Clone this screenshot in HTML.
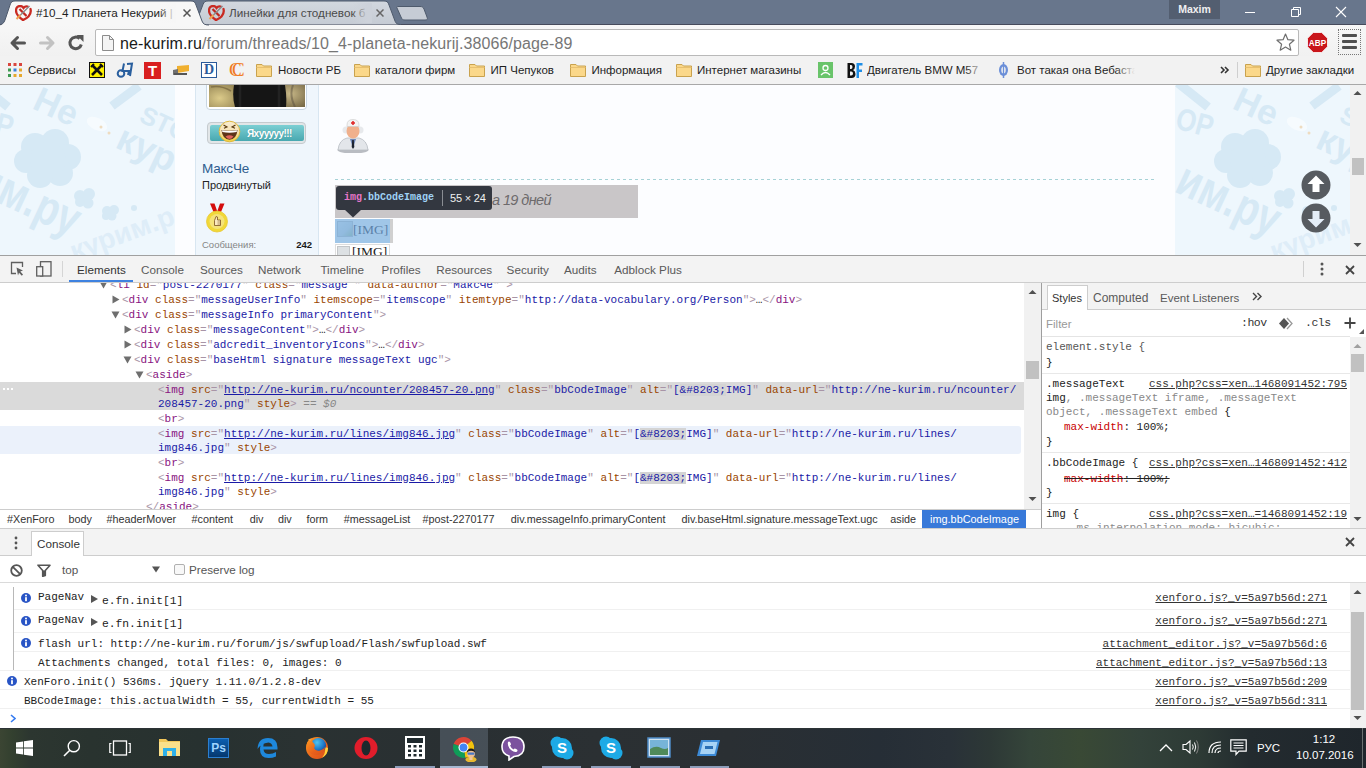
<!DOCTYPE html>
<html><head><meta charset="utf-8">
<style>
*{margin:0;padding:0;box-sizing:border-box}
html,body{width:1366px;height:768px;overflow:hidden;background:#fff;font-family:"Liberation Sans",sans-serif;font-size:12px;color:#222}
.a{position:absolute}
.mono{font-family:"Liberation Mono",monospace;font-size:11px;line-height:14px;white-space:nowrap}
.ui{font-family:"Liberation Sans",sans-serif;font-size:11.5px;line-height:16px;white-space:nowrap}
.bm{top:62px;font-size:11.5px;line-height:16px;color:#1e1e1e;white-space:nowrap}
.pat{background:#eef7fd;overflow:hidden}
.pt{position:absolute;color:#d9ebf7;font-weight:bold;white-space:nowrap;transform-origin:0 0;line-height:1}
.cl{position:absolute;background:#d6e9f6;border-radius:50%}
u{text-decoration:underline}
</style></head><body>
<!-- TITLEBAR -->
<div class="a" style="left:0;top:0;width:1366px;height:25px;background:#68768c"></div>
<div class="a" style="left:0;top:25px;width:1366px;height:31px;background:linear-gradient(#f7f7f7,#f1f1f1)"></div>
<div class="a" style="left:0;top:24px;width:1366px;height:1px;background:#464a5b"></div>
<svg class="a" style="left:0;top:0" width="440" height="26">
  <defs>
    <linearGradient id="tg2" x1="0" y1="0" x2="0" y2="1"><stop offset="0" stop-color="#d3d8df"/><stop offset="1" stop-color="#c5cbd4"/></linearGradient>
  </defs>
  
  <path d="M192,24.5 C195,24.5 196,23 197,20 L203,4.5 C204,2 205,1 208,1 L384,1 C387,1 388,2 389,5 L395,21 C396,23.5 397,24.5 401,24.5 Z" fill="url(#tg2)"/>
  <path d="M192,24.5 C195,24.5 196,23 197,20 L203,4.5 C204,2 205,1 208,1 L384,1 C387,1 388,2 389,5 L395,21 C396,23.5 397,24.5 401,24.5" fill="none" stroke="#4e5a6c" stroke-width="1"/>
  <path d="M398,6.5 L420,6.5 C422,6.5 423,7 424,9 L427,17 C428,19.5 427,20 425,20 L405,20 C403,20 402,19.5 401,17 L397,8 C396.5,7 397,6.5 398,6.5 Z" fill="#c6ccd5" stroke="#4e5a6c" stroke-width="1"/>
  <path d="M-2,26 C2,25 4,23 5,20 L10,5 C11,2 12,1 15,1 L191,1 C194,1 195,2 196,5 L202,21 C203,24 205,25 209,26 Z" fill="#f7f7f7"/>
  <path d="M-2,25 C2,25 4,23 5,20 L10,5 C11,2 12,1 15,1 L191,1 C194,1 195,2 196,5 L202,21 C203,24 205,25 209,25" fill="none" stroke="#4e5a6c" stroke-width="1"/>
</svg>
<!-- tab favicons -->
<svg class="a" style="left:15px;top:5px" width="17" height="16" viewBox="0 0 17 16">
  <path d="M8,15 C3.5,12 1,9 1,5.5 C1,2.5 3,1 5,1 C7,1 8,2 8.5,3 C9.5,1.8 11,1.2 12.5,1.6" fill="none" stroke="#c92a22" stroke-width="2.3" stroke-linecap="round"/>
  <path d="M15.5,4 C16,6 15.8,9 13.5,11.5 C12,13 10,14.2 8,15" fill="none" stroke="#c92a22" stroke-width="2.3" stroke-linecap="round"/>
  <line x1="4.5" y1="4" x2="11.5" y2="11" stroke="#c02820" stroke-width="2.3"/>
  <line x1="5" y1="10.5" x2="14.5" y2="1" stroke="#8a8a8a" stroke-width="1.5"/>
  <line x1="1.5" y1="14" x2="5.5" y2="10" stroke="#f0a050" stroke-width="2"/>
</svg>
<svg class="a" style="left:208px;top:5px" width="17" height="16" viewBox="0 0 17 16">
  <path d="M8,15 C3.5,12 1,9 1,5.5 C1,2.5 3,1 5,1 C7,1 8,2 8.5,3 C9.5,1.8 11,1.2 12.5,1.6" fill="none" stroke="#c92a22" stroke-width="2.3" stroke-linecap="round"/>
  <path d="M15.5,4 C16,6 15.8,9 13.5,11.5 C12,13 10,14.2 8,15" fill="none" stroke="#c92a22" stroke-width="2.3" stroke-linecap="round"/>
  <line x1="4.5" y1="4" x2="11.5" y2="11" stroke="#c02820" stroke-width="2.3"/>
  <line x1="5" y1="10.5" x2="14.5" y2="1" stroke="#8a8a8a" stroke-width="1.5"/>
  <line x1="1.5" y1="14" x2="5.5" y2="10" stroke="#f0a050" stroke-width="2"/>
</svg>
<div class="a" style="left:36px;top:5px;font-size:11.7px;color:#1e1e1e;white-space:nowrap;width:138px;overflow:hidden;line-height:16px">#10_4 Планета Некурий | Сообщество</div>
<div class="a" style="left:158px;top:3px;width:18px;height:20px;background:linear-gradient(90deg,rgba(246,246,246,0),#f6f6f6)"></div>
<div class="a" style="left:229px;top:5px;font-size:11.7px;color:#4a4a4a;white-space:nowrap;width:140px;overflow:hidden;line-height:16px">Линейки для стодневок б</div>
<div class="a" style="left:352px;top:3px;width:20px;height:20px;background:linear-gradient(90deg,rgba(205,210,218,0),#cdd2da 80%)"></div>
<svg class="a" style="left:183px;top:9px" width="8" height="8"><path d="M0.5,0.5 L7.5,7.5 M7.5,0.5 L0.5,7.5" stroke="#555" stroke-width="1.5"/></svg>
<svg class="a" style="left:376px;top:9px" width="8" height="8"><path d="M0.5,0.5 L7.5,7.5 M7.5,0.5 L0.5,7.5" stroke="#666" stroke-width="1.5"/></svg>
<!-- profile badge -->
<div class="a" style="left:1169px;top:0;width:51px;height:19px;background:#535e70;color:#f0f0f0;font-size:10.5px;font-weight:bold;line-height:18px;text-align:center">Maxim</div>
<!-- window controls -->
<div class="a" style="left:1245px;top:12px;width:10px;height:1px;background:#fff"></div>
<svg class="a" style="left:1289px;top:6px" width="12" height="12"><path d="M2.5,3.5 h7 v7 h-7 z M4.5,3.5 v-2 h7 v7 h-2" fill="none" stroke="#fff" stroke-width="1"/></svg>
<svg class="a" style="left:1335px;top:6px" width="12" height="12"><path d="M1,1 L11,11 M11,1 L1,11" stroke="#fff" stroke-width="1.1"/></svg>

<!-- TOOLBAR -->

<svg class="a" style="left:9px;top:35px" width="18" height="16" viewBox="0 0 18 16"><path d="M15.5,8 H3.5 M8.5,2.5 L3,8 L8.5,13.5" fill="none" stroke="#555" stroke-width="3" stroke-linecap="round" stroke-linejoin="round"/></svg>
<svg class="a" style="left:38px;top:35px" width="18" height="16" viewBox="0 0 18 16"><path d="M2.5,8 H14.5 M9.5,2.5 L15,8 L9.5,13.5" fill="none" stroke="#c2c2c2" stroke-width="3" stroke-linecap="round" stroke-linejoin="round"/></svg>
<svg class="a" style="left:67px;top:34px" width="18" height="18" viewBox="0 0 18 18"><path d="M14.3,10.5 A5.8,5.8 0 1 1 12.6,4.6" fill="none" stroke="#555" stroke-width="3"/><path d="M9.5,1 L16.5,1 L16.5,8 Z" fill="#555"/></svg>
<div class="a" style="left:95px;top:29px;width:1204px;height:27px;background:#fff;border:1px solid #b9b9b9;border-radius:2px"></div>
<svg class="a" style="left:102px;top:35px" width="12" height="16" viewBox="0 0 12 16"><path d="M0.5,0.5 H7.5 L11.5,4.5 V15.5 H0.5 Z" fill="#f4f4f4" stroke="#8c8c8c"/><path d="M7.5,0.5 V4.5 H11.5" fill="none" stroke="#8c8c8c"/></svg>
<div class="a" style="left:120px;top:33.7px;font-size:16px;line-height:20px;color:#767676;white-space:nowrap;letter-spacing:0.1px"><span style="color:#1a1a1a">ne-kurim.ru</span>/forum/threads/10_4-planeta-nekurij.38066/page-89</div>
<svg class="a" style="left:1276px;top:33px" width="19" height="19" viewBox="0 0 19 19"><path d="M9.5,1 L11.9,6.7 L18,7.2 L13.4,11.2 L14.8,17.2 L9.5,14 L4.2,17.2 L5.6,11.2 L1,7.2 L7.1,6.7 Z" fill="none" stroke="#6e6e6e" stroke-width="1.2" stroke-linejoin="round"/></svg>
<svg class="a" style="left:1307px;top:32px" width="21" height="21" viewBox="0 0 21 21"><path d="M6.3,0.5 H14.7 L20.5,6.3 V14.7 L14.7,20.5 H6.3 L0.5,14.7 V6.3 Z" fill="#c9161b" stroke="#fff" stroke-width="0.8"/><text x="10.5" y="13.8" text-anchor="middle" font-family="Liberation Sans" font-weight="bold" font-size="8.2" fill="#fff">ABP</text></svg>
<div class="a" style="left:1338px;top:29px;width:23px;height:26px;border:1px dotted #777"></div>
<div class="a" style="left:1342px;top:34px;width:15px;height:3px;background:#4f4f4f;border-radius:1px"></div>
<div class="a" style="left:1342px;top:40px;width:15px;height:3px;background:#4f4f4f;border-radius:1px"></div>
<div class="a" style="left:1342px;top:46px;width:15px;height:3px;background:#4f4f4f;border-radius:1px"></div>
<!-- BOOKMARKS -->
<div class="a" style="left:0;top:56px;width:1366px;height:28px;background:#f2f2f2"></div>
<div class="a" style="left:0;top:84px;width:1366px;height:1px;background:#a8a8a8"></div>
<svg class="a" style="left:8px;top:63px" width="14" height="14" viewBox="0 0 14 14">
 <rect x="0" y="0" width="3" height="3" fill="#d9453d"/><rect x="5.5" y="0" width="3" height="3" fill="#d9453d"/><rect x="11" y="0" width="3" height="3" fill="#d9453d"/>
 <rect x="0" y="5.5" width="3" height="3" fill="#3d9a50"/><rect x="5.5" y="5.5" width="3" height="3" fill="#3b80d9"/><rect x="11" y="5.5" width="3" height="3" fill="#e6a82e"/>
 <rect x="0" y="11" width="3" height="3" fill="#3d9a50"/><rect x="5.5" y="11" width="3" height="3" fill="#e6a82e"/><rect x="11" y="11" width="3" height="3" fill="#e6a82e"/>
</svg>
<div class="a bm" style="left:28px">Сервисы</div>
<svg class="a" style="left:89px;top:62px" width="16" height="16" viewBox="0 0 16 16"><rect x="0.5" y="0.5" width="15" height="15" fill="#fff200" stroke="#111"/><path d="M3,3 L13,13 M13,3 L3,13" stroke="#111" stroke-width="2.6"/><path d="M2,5 L5,2 M11,2 L14,5" stroke="#111" stroke-width="2"/></svg>
<svg class="a" style="left:116px;top:62px" width="18" height="16" viewBox="0 0 18 16"><circle cx="5" cy="11.5" r="3.3" fill="none" stroke="#2a5f9e" stroke-width="2"/><path d="M8,1.5 L6.5,9 H13 L12,13 M11,2 L16,1.5 L14,14" fill="none" stroke="#2a5f9e" stroke-width="2"/></svg>
<div class="a" style="left:144px;top:62px;width:17px;height:17px;background:#d92020;color:#fff;font-weight:bold;font-size:15px;line-height:17px;text-align:center;font-family:'Liberation Sans'">T</div>
<svg class="a" style="left:172px;top:63px" width="18" height="14" viewBox="0 0 18 14"><path d="M5,3 L17,2 L17,8 L5,10 Z" fill="#f0b030"/><path d="M1,7 L6,6 L6,11 L1,12 Z" fill="#707070"/><rect x="2" y="10" width="13" height="2" fill="#555"/></svg>
<div class="a" style="left:201px;top:62px;width:16px;height:16px;border:1px solid #2a5a9a;background:#fff;color:#2a5a9a;font-weight:bold;font-size:14px;line-height:14px;text-align:center;font-family:'Liberation Serif'">D</div>
<div class="a" style="left:229px;top:59px;color:#f07b22;font-size:19px;line-height:22px;font-family:'Liberation Serif'">C</div>
<div class="a" style="left:232px;top:59px;color:#f07b22;font-size:19px;line-height:22px;font-family:'Liberation Serif'">C</div>
<svg class="a" style="left:256px;top:62px" width="16" height="16" viewBox="0 0 16 16"><path d="M0.5,2.5 H6 L7.5,4 H15.5 V14.5 H0.5 Z" fill="#fbd88a" stroke="#c9a24e"/><path d="M0.5,5.5 H15.5" stroke="#e8c070"/></svg>
<div class="a bm" style="left:278px">Новости РБ</div>
<svg class="a" style="left:354px;top:62px" width="16" height="16" viewBox="0 0 16 16"><path d="M0.5,2.5 H6 L7.5,4 H15.5 V14.5 H0.5 Z" fill="#fbd88a" stroke="#c9a24e"/><path d="M0.5,5.5 H15.5" stroke="#e8c070"/></svg>
<div class="a bm" style="left:375px">каталоги фирм</div>
<svg class="a" style="left:469px;top:62px" width="16" height="16" viewBox="0 0 16 16"><path d="M0.5,2.5 H6 L7.5,4 H15.5 V14.5 H0.5 Z" fill="#fbd88a" stroke="#c9a24e"/><path d="M0.5,5.5 H15.5" stroke="#e8c070"/></svg>
<div class="a bm" style="left:490.5px">ИП Чепуков</div>
<svg class="a" style="left:570px;top:62px" width="16" height="16" viewBox="0 0 16 16"><path d="M0.5,2.5 H6 L7.5,4 H15.5 V14.5 H0.5 Z" fill="#fbd88a" stroke="#c9a24e"/><path d="M0.5,5.5 H15.5" stroke="#e8c070"/></svg>
<div class="a bm" style="left:591.5px">Информация</div>
<svg class="a" style="left:676px;top:62px" width="16" height="16" viewBox="0 0 16 16"><path d="M0.5,2.5 H6 L7.5,4 H15.5 V14.5 H0.5 Z" fill="#fbd88a" stroke="#c9a24e"/><path d="M0.5,5.5 H15.5" stroke="#e8c070"/></svg>
<div class="a bm" style="left:697px">Интернет магазины</div>
<div class="a" style="left:818px;top:62px;width:15px;height:16px;background:#69c46a"></div><svg class="a" style="left:818px;top:62px" width="15" height="16"><circle cx="7.5" cy="6" r="2.5" fill="none" stroke="#fff" stroke-width="1.3"/><path d="M3,13 Q7.5,8 12,13" fill="none" stroke="#fff" stroke-width="1.3"/></svg>
<svg class="a" style="left:847px;top:62px" width="16" height="17" viewBox="0 0 16 17"><path d="M0.5,1 H4.5 Q8,1 8,4.5 Q8,7 6,8 Q8.5,9 8.5,12 Q8.5,16 4.5,16 H0.5 Z M3,3 V7 H4 Q5.5,7 5.5,5 Q5.5,3 4,3 Z M3,9.5 V13.5 H4.2 Q6,13.5 6,11.5 Q6,9.5 4.2,9.5 Z" fill="#111" fill-rule="evenodd"/><path d="M9.5,1 H15.5 V3.5 H12 V7.5 H15 V10 H12 V16 H9.5 Z" fill="#1f8ee6"/></svg>
<div class="a bm" style="left:867px;width:118px;overflow:hidden">Двигатель BMW M57</div>
<div class="a" style="left:965px;top:60px;width:20px;height:20px;background:linear-gradient(90deg,rgba(242,242,242,0),#f2f2f2)"></div>
<svg class="a" style="left:998px;top:62px" width="11" height="16" viewBox="0 0 11 16"><ellipse cx="5.5" cy="8" rx="4.5" ry="6" fill="#6b8fd8"/><path d="M5.5,0 V16" stroke="#6b8fd8" stroke-width="1.5"/><ellipse cx="5.5" cy="8" rx="2.2" ry="3.5" fill="#f2f2f2"/><path d="M5.5,3 V13" stroke="#6b8fd8" stroke-width="1.3"/></svg>
<div class="a bm" style="left:1017px;width:118px;overflow:hidden">Вот такая она Вебаста</div>
<div class="a" style="left:1115px;top:60px;width:20px;height:20px;background:linear-gradient(90deg,rgba(242,242,242,0),#f2f2f2)"></div>
<svg class="a" style="left:1220px;top:66px" width="10" height="8"><path d="M1,1 L4,4 L1,7 M5,1 L8,4 L5,7" fill="none" stroke="#333" stroke-width="1.6"/></svg>
<div class="a" style="left:1237px;top:62px;width:1px;height:16px;background:#cfcfcf"></div>
<svg class="a" style="left:1245px;top:62px" width="16" height="16" viewBox="0 0 16 16"><path d="M0.5,2.5 H6 L7.5,4 H15.5 V14.5 H0.5 Z" fill="#fbd88a" stroke="#c9a24e"/><path d="M0.5,5.5 H15.5" stroke="#e8c070"/></svg>
<div class="a bm" style="left:1266px">Другие закладки</div>
<!-- PAGE -->
<div class="a" style="left:0;top:85px;width:1350px;height:170px;background:#fcfdff;overflow:hidden">
  <svg class="a" style="left:0;top:0" width="175" height="170"><rect width="175" height="170" fill="#eef7fd"/><defs><g id="tile" fill="#d6e9f5" font-family="Liberation Sans" font-weight="bold">
  <text x="31" y="23" font-size="35" transform="rotate(25 31 23)">Не</text>
  <text x="0" y="0" font-size="26" transform="translate(-26 43) rotate(15) scale(1 1.2)">OP</text>
  <text x="138" y="36" font-size="25" transform="rotate(25 138 36)">STO</text>
  <text x="114" y="62" font-size="37" transform="rotate(25 114 62)">кур</text>
  <text x="0" y="0" font-size="39" transform="translate(-27 106) rotate(25) scale(1 1.25)">им.ру</text>
  <text x="74" y="176" font-size="28" fill="#deedf8" transform="rotate(-20 74 176)">курим.р</text>
  <path d="M112,21 L139,1" stroke="#d6e9f5" stroke-width="9"/>
  <path d="M-22,-2 L8,22" stroke="#d6e9f5" stroke-width="9"/>
  <g>
   <circle cx="35" cy="62" r="14"/><circle cx="55" cy="58" r="14"/><circle cx="68" cy="72" r="13"/><circle cx="60" cy="88" r="13"/><circle cx="40" cy="90" r="13"/><circle cx="26" cy="76" r="12"/><circle cx="48" cy="75" r="18"/>
  </g>
  <g><circle cx="80" cy="111" r="6"/><circle cx="89" cy="109" r="6"/><circle cx="88" cy="118" r="5.5"/><circle cx="80" cy="117" r="5"/></g>
  <g><circle cx="107" cy="126" r="5"/><circle cx="114" cy="125" r="5"/><circle cx="112" cy="131" r="4.5"/><circle cx="106" cy="131" r="4"/></g>
  <circle cx="134" cy="123" r="3"/>
  <ellipse cx="97" cy="39" rx="11" ry="6" fill="#f6fbfe" transform="rotate(25 97 39)"/>
  <circle cx="101" cy="42" r="1.5" fill="#eedcc0"/><circle cx="109" cy="48" r="1.5" fill="#eedcc0"/>
</g></defs><use href="#tile"/></svg>
  <svg class="a" style="left:1175px;top:0" width="175" height="170"><rect width="175" height="170" fill="#eef7fd"/><use href="#tile" x="25"/></svg>
  <!-- sidebar -->
  <div class="a" style="left:195px;top:-1px;width:124px;height:172px;background:#eff6fc;border-left:1px solid #d8e6f1;border-right:1px solid #d8e6f1"></div>
  <div class="a" style="left:206px;top:-4px;width:101px;height:29px;background:#fff;border:1px solid #c8d6e2;border-radius:4px"></div>
  <svg class="a" style="left:209px;top:0" width="96" height="22" viewBox="0 0 96 22"><defs><radialGradient id="kh1" cx="0.35" cy="0.6" r="0.7"><stop offset="0" stop-color="#dccb8a"/><stop offset="1" stop-color="#9a8a58"/></radialGradient><radialGradient id="kh2" cx="0.5" cy="0.4" r="0.7"><stop offset="0" stop-color="#c8b888"/><stop offset="1" stop-color="#7a6c48"/></radialGradient></defs><rect width="30" height="22" fill="url(#kh1)"/><rect x="66" width="30" height="22" fill="url(#kh2)"/><path d="M2,2 Q12,0 22,6" stroke="#6a5a35" stroke-width="1.5" fill="none" opacity="0.6"/><path d="M84,0 Q80,10 86,22" stroke="#5a5040" stroke-width="2" fill="none" opacity="0.5"/><path d="M25,0 H76 Q78,12 77,22 H26 Q23,12 25,0 Z" fill="#151515"/><path d="M31,0 V22 M70,0 V22" stroke="#2c2c2c" stroke-width="2.5" opacity="0.6"/></svg>
  <div class="a" style="left:207px;top:37px;width:99px;height:22px;background:#e2e6e8;border:1px solid #c5cbcf;border-radius:4px"></div>
  <div class="a" style="left:210px;top:40px;width:94px;height:16px;background:linear-gradient(#7ccfd3,#48a8b0);border-radius:2px"></div>
  <div class="a" style="left:247px;top:41px;font-size:10px;line-height:16px;color:#fff;font-weight:bold;letter-spacing:-0.6px;text-shadow:0 0 1px #3a8a90">Яхууууу!!!</div>
  <svg class="a" style="left:218px;top:35px" width="23" height="23" viewBox="0 0 23 23"><defs><linearGradient id="smg" x1="0" y1="0" x2="0" y2="1"><stop offset="0" stop-color="#f8ecd2"/><stop offset="0.55" stop-color="#f6e2b0"/><stop offset="1" stop-color="#f3d035"/></linearGradient></defs><circle cx="11.5" cy="11.5" r="10.3" fill="url(#smg)" stroke="#e0b83a" stroke-width="1"/><path d="M3.5,10 Q11.5,11.5 19.5,10 Q18.5,19.5 11.5,19.8 Q4.5,19.5 3.5,10 Z" fill="#5e3418"/><path d="M4,10.2 Q11.5,11.6 19,10.2 L18.7,12 Q11.5,13.3 4.3,12 Z" fill="#fff"/><path d="M7.5,16.5 Q11.5,14 15.5,16.5 Q13.5,19 11.5,19 Q9.5,19 7.5,16.5Z" fill="#e0625a"/><path d="M5.5,5 L9,7 L6,8.3 M17.5,5 L14,7 L17,8.3" fill="none" stroke="#5a3a10" stroke-width="1.1"/></svg>
  <div class="a" style="left:202px;top:76.2px;font-size:13.5px;line-height:16px;color:#2e5d8f;letter-spacing:-0.2px">МаксЧе</div>
  <div class="a" style="left:202px;top:93px;font-size:11px;line-height:14px;color:#222">Продвинутый</div>
  <svg class="a" style="left:205px;top:117px" width="24" height="31" viewBox="0 0 24 31"><path d="M5,1.5 L9.5,1.5 L12.5,10 L8.5,10 Z M19.5,1.5 L15,1.5 L12,10 L16,10 Z" fill="#d40d0d"/><circle cx="12" cy="19.5" r="10.5" fill="#f1d838" stroke="#e8c830" stroke-width="0.8"/><circle cx="12" cy="19.5" r="7.5" fill="#f5e37a"/><path d="M9.5,23 V18.5 L11,14.5 L12.5,15 V18 H15.5 V23.5 H9.5 Z" fill="#fbe9c0" stroke="#7a5020" stroke-width="0.8"/><path d="M12.5,20 H15.5 M12.5,22 H15.5" stroke="#7a5020" stroke-width="0.6"/></svg>
  <div class="a" style="left:202px;top:153.5px;font-size:9.5px;line-height:12px;color:#858585">Сообщения:</div>
  <div class="a" style="left:292px;top:153.5px;width:20px;font-size:9.5px;line-height:12px;color:#1a1a1a;font-weight:bold;text-align:right">242</div>
  <!-- doctor -->
  <svg class="a" style="left:337px;top:33px" width="32" height="35" viewBox="0 0 32 35"><ellipse cx="16" cy="32" rx="15.5" ry="3.5" fill="#b9bcc2"/><path d="M1,32 Q2,22 10,20 L22,20 Q30,22 31,32 Z" fill="#e3e6ea" stroke="#b7bcc3" stroke-width="0.8"/><path d="M13,21 L16,30 L19,21 Z" fill="#6d86b8"/><path d="M15.2,22 L16.8,22 L17.3,29 L16,31 L14.7,29 Z" fill="#1d2430"/><circle cx="9" cy="12" r="3.5" fill="#e7e9ec"/><circle cx="23" cy="12" r="3.5" fill="#e7e9ec"/><ellipse cx="16" cy="13" rx="6.5" ry="7.5" fill="#f0b08c"/><path d="M10,7 Q10,1.5 16,1.5 Q22,1.5 22,7 L22,8.5 L10,8.5 Z" fill="#f3f3f3" stroke="#c9c9c9" stroke-width="0.6"/><path d="M16,3 V7 M14,5 H18" stroke="#e02525" stroke-width="1.5"/></svg>
  <!-- dashed -->
  <div class="a" style="left:335px;top:94px;width:822px;height:1px;background:repeating-linear-gradient(90deg,#a6d2d6 0 3px,transparent 3px 6px)"></div>
  <!-- grey signature box -->
  <div class="a" style="left:335px;top:100px;width:303px;height:33px;background:#c9c6c8"></div>
  <div class="a" style="left:492px;top:106px;font-size:14.5px;line-height:18px;color:#6d6a6c;font-style:italic;letter-spacing:-0.6px">а 19 дней</div>
  <!-- tooltip -->
  <div class="a" style="left:336px;top:101px;width:156px;height:24px;background:#333740;border-radius:3px"></div>
  <svg class="a" style="left:344px;top:124px" width="18" height="9"><path d="M0,0 L18,0 L9,8.5 Z" fill="#333740"/></svg>
  <div class="a mono" style="left:344px;top:106px;font-size:10px;line-height:14px;color:#9fd2f6;white-space:nowrap;font-weight:bold"><span style="color:#e776c9">img</span>.bbCodeImage</div>
  <div class="a" style="left:442px;top:105px;width:1px;height:16px;background:#8a8d93"></div>
  <div class="a" style="left:450px;top:105.5px;font-size:11px;line-height:15px;color:#f1f1f1;letter-spacing:-0.2px">55 × 24</div>
  <!-- highlighted img -->
  <div class="a" style="left:335px;top:134px;width:55px;height:24px;background:#fff"></div>
  <div class="a" style="left:337px;top:136px;width:16px;height:16px;background:linear-gradient(135deg,#e8eef2 0%,#d4dde4 60%,#a9c7a0 100%);border:1px solid #c3c6c9"></div>
  <div class="a" style="left:353px;top:136px;font-family:'Liberation Serif';font-size:13.5px;line-height:17px;color:#334">[IMG]</div>
  <div class="a" style="left:335px;top:134px;width:55px;height:24px;background:rgba(111,168,220,0.66)"></div>
  <div class="a" style="left:390px;top:134px;width:3px;height:24px;background:#d0d0d0"></div>
  <div class="a" style="left:335px;top:159px;width:55px;height:12px;background:#fff;border:1px solid #ddd"></div>
  <div class="a" style="left:337px;top:161px;width:13px;height:14px;background:#dde1e4;border:1px solid #c3c6c9"></div>
  <div class="a" style="left:352px;top:158px;font-family:'Liberation Serif';font-size:13.5px;line-height:17px;color:#222">[IMG]</div>
  <!-- scroll buttons -->
  <svg class="a" style="left:1301px;top:85px" width="30" height="30" viewBox="0 0 30 30"><circle cx="15" cy="15" r="14.5" fill="#575b60"/><path d="M15,5.5 L23.5,14 H18.5 V22 H11.5 V14 H6.5 Z" fill="#fff"/></svg>
  <svg class="a" style="left:1301px;top:118px" width="30" height="30" viewBox="0 0 30 30"><circle cx="15" cy="15" r="14.5" fill="#575b60"/><path d="M15,24.5 L23.5,16 H18.5 V8 H11.5 V16 H6.5 Z" fill="#e5eef8"/></svg>
</div>
<!-- page scrollbar -->
<div class="a" style="left:1350px;top:85px;width:16px;height:170px;background:#f1f1f1"></div>
<svg class="a" style="left:1353px;top:90px" width="9" height="6"><path d="M0.5,5 L4.5,1 L8.5,5 Z" fill="#505050"/></svg>
<div class="a" style="left:1352px;top:158px;width:12px;height:17px;background:#c1c1c1"></div>
<svg class="a" style="left:1353px;top:242px" width="9" height="6"><path d="M0.5,1 L4.5,5 L8.5,1 Z" fill="#505050"/></svg>
<!-- DEVTOOLS -->
<div class="a" style="left:0;top:255px;width:1366px;height:1px;background:#a0a0a0"></div>
<div class="a" style="left:0;top:256px;width:1366px;height:26px;background:#f3f3f3"></div>
<div class="a" style="left:0;top:282px;width:1366px;height:1px;background:#cdcdcd"></div>
<svg class="a" style="left:10px;top:261px" width="14" height="16" viewBox="0 0 14 16"><path d="M6,12.5 H1.5 V1.5 H12.5 V6" fill="none" stroke="#5f5f5f" stroke-width="1.3"/><path d="M6.5,6.5 L13,9.5 L10.3,10.5 L13,13.5 L11.8,14.8 L9,11.8 L8,14.5 Z" fill="#5f5f5f"/></svg>
<svg class="a" style="left:36px;top:261px" width="16" height="16" viewBox="0 0 16 16"><rect x="4.5" y="0.7" width="10.5" height="14.3" fill="none" stroke="#5f5f5f" stroke-width="1.3"/><rect x="0.7" y="5.7" width="6" height="9.3" fill="#f3f3f3" stroke="#5f5f5f" stroke-width="1.3"/></svg>
<div class="a" style="left:62px;top:261px;width:1px;height:16px;background:#d5d5d5"></div>
<div class="a ui" style="left:77px;top:262px;color:#333;font-size:11.7px">Elements</div>
<div class="a ui" style="left:141px;top:262px;color:#5a5a5a;font-size:11.7px">Console</div>
<div class="a ui" style="left:200px;top:262px;color:#5a5a5a;font-size:11.7px">Sources</div>
<div class="a ui" style="left:258px;top:262px;color:#5a5a5a;font-size:11.7px">Network</div>
<div class="a ui" style="left:320.4px;top:262px;color:#5a5a5a;font-size:11.7px">Timeline</div>
<div class="a ui" style="left:381.6px;top:262px;color:#5a5a5a;font-size:11.7px">Profiles</div>
<div class="a ui" style="left:436.3px;top:262px;color:#5a5a5a;font-size:11.7px">Resources</div>
<div class="a ui" style="left:506.6px;top:262px;color:#5a5a5a;font-size:11.7px">Security</div>
<div class="a ui" style="left:564px;top:262px;color:#5a5a5a;font-size:11.7px">Audits</div>
<div class="a ui" style="left:614.3px;top:262px;color:#5a5a5a;font-size:11.7px">Adblock Plus</div>
<div class="a" style="left:69px;top:280px;width:64px;height:2px;background:#3e82e0"></div>
<div class="a" style="left:1303px;top:261px;width:1px;height:16px;background:#d0d0d0"></div>
<svg class="a" style="left:1320px;top:262px" width="4" height="14"><circle cx="2" cy="2" r="1.5" fill="#555"/><circle cx="2" cy="7" r="1.5" fill="#555"/><circle cx="2" cy="12" r="1.5" fill="#555"/></svg>
<svg class="a" style="left:1345px;top:265px" width="10" height="10"><path d="M1,1 L9,9 M9,1 L1,9" stroke="#444" stroke-width="1.8"/></svg>
<div class="a" style="left:0;top:283px;width:1024px;height:226px;overflow:hidden;background:#fff">
<div class="a" style="left:0;top:99px;width:1024px;height:28px;background:#dadada"></div>
<div class="a" style="left:0;top:143px;width:1021px;height:28px;background:#ebf1fb;border-radius:0 3px 3px 0"></div>
<div class="a" style="left:2.5px;top:105px;width:2px;height:2px;background:#fff"></div><div class="a" style="left:6.5px;top:105px;width:2px;height:2px;background:#fff"></div><div class="a" style="left:10.5px;top:105px;width:2px;height:2px;background:#fff"></div>
<div class="a mono" style="left:110px;top:-5.2px"><span style="color:#a894a6">&lt;</span><span style="color:#881280">li</span> <span style="color:#994500">id</span><span style="color:#a894a6">="</span><span style="color:#1a1aa6">post-2270177</span><span style="color:#a894a6">"</span> <span style="color:#994500">class</span><span style="color:#a894a6">="</span><span style="color:#1a1aa6">message  </span><span style="color:#a894a6">"</span>  <span style="color:#994500">data-author</span><span style="color:#a894a6">="</span><span style="color:#1a1aa6">МаксЧе</span><span style="color:#a894a6">"</span> <span style="color:#a894a6">&gt;</span></div>
<svg class="a" style="left:99px;top:-2.5px" width="9" height="8"><path d="M0.5,0.5 L8.5,0.5 L4.5,7.5 Z" fill="#6e6e6e"/></svg>
<div class="a mono" style="left:122px;top:9.8px"><span style="color:#a894a6">&lt;</span><span style="color:#881280">div</span> <span style="color:#994500">class</span><span style="color:#a894a6">="</span><span style="color:#1a1aa6">messageUserInfo</span><span style="color:#a894a6">"</span> <span style="color:#994500">itemscope</span><span style="color:#a894a6">="</span><span style="color:#1a1aa6">itemscope</span><span style="color:#a894a6">"</span> <span style="color:#994500">itemtype</span><span style="color:#a894a6">="</span><span style="color:#1a1aa6">http://data-vocabulary.org/Person</span><span style="color:#a894a6">"</span><span style="color:#a894a6">&gt;</span><span style="color:#222">…</span><span style="color:#a894a6">&lt;/</span><span style="color:#881280">div</span><span style="color:#a894a6">&gt;</span></div>
<svg class="a" style="left:112px;top:11.5px" width="8" height="9"><path d="M0.5,0.5 L7.5,4.5 L0.5,8.5 Z" fill="#6e6e6e"/></svg>
<div class="a mono" style="left:122px;top:24.8px"><span style="color:#a894a6">&lt;</span><span style="color:#881280">div</span> <span style="color:#994500">class</span><span style="color:#a894a6">="</span><span style="color:#1a1aa6">messageInfo primaryContent</span><span style="color:#a894a6">"</span><span style="color:#a894a6">&gt;</span></div>
<svg class="a" style="left:111px;top:27.5px" width="9" height="8"><path d="M0.5,0.5 L8.5,0.5 L4.5,7.5 Z" fill="#6e6e6e"/></svg>
<div class="a mono" style="left:134px;top:39.8px"><span style="color:#a894a6">&lt;</span><span style="color:#881280">div</span> <span style="color:#994500">class</span><span style="color:#a894a6">="</span><span style="color:#1a1aa6">messageContent</span><span style="color:#a894a6">"</span><span style="color:#a894a6">&gt;</span><span style="color:#222">…</span><span style="color:#a894a6">&lt;/</span><span style="color:#881280">div</span><span style="color:#a894a6">&gt;</span></div>
<svg class="a" style="left:124px;top:41.5px" width="8" height="9"><path d="M0.5,0.5 L7.5,4.5 L0.5,8.5 Z" fill="#6e6e6e"/></svg>
<div class="a mono" style="left:134px;top:54.8px"><span style="color:#a894a6">&lt;</span><span style="color:#881280">div</span> <span style="color:#994500">class</span><span style="color:#a894a6">="</span><span style="color:#1a1aa6">adcredit_inventoryIcons</span><span style="color:#a894a6">"</span><span style="color:#a894a6">&gt;</span><span style="color:#222">…</span><span style="color:#a894a6">&lt;/</span><span style="color:#881280">div</span><span style="color:#a894a6">&gt;</span></div>
<svg class="a" style="left:124px;top:56.5px" width="8" height="9"><path d="M0.5,0.5 L7.5,4.5 L0.5,8.5 Z" fill="#6e6e6e"/></svg>
<div class="a mono" style="left:134px;top:69.8px"><span style="color:#a894a6">&lt;</span><span style="color:#881280">div</span> <span style="color:#994500">class</span><span style="color:#a894a6">="</span><span style="color:#1a1aa6">baseHtml signature messageText ugc</span><span style="color:#a894a6">"</span><span style="color:#a894a6">&gt;</span></div>
<svg class="a" style="left:123px;top:72.5px" width="9" height="8"><path d="M0.5,0.5 L8.5,0.5 L4.5,7.5 Z" fill="#6e6e6e"/></svg>
<div class="a mono" style="left:146px;top:84.8px"><span style="color:#a894a6">&lt;</span><span style="color:#881280">aside</span><span style="color:#a894a6">&gt;</span></div>
<svg class="a" style="left:135px;top:87.5px" width="9" height="8"><path d="M0.5,0.5 L8.5,0.5 L4.5,7.5 Z" fill="#6e6e6e"/></svg>
<div class="a mono" style="left:158px;top:99.8px"><span style="color:#a894a6">&lt;</span><span style="color:#881280">img</span> <span style="color:#994500">src</span><span style="color:#a894a6">="</span><span style="color:#1a1aa6"><u>http://ne-kurim.ru/ncounter/208457-20.png</u></span><span style="color:#a894a6">"</span> <span style="color:#994500">class</span><span style="color:#a894a6">="</span><span style="color:#1a1aa6">bbCodeImage</span><span style="color:#a894a6">"</span> <span style="color:#994500">alt</span><span style="color:#a894a6">="</span><span style="color:#1a1aa6">[<span style="background:#d4d4d4">&amp;#8203;</span>IMG]</span><span style="color:#a894a6">"</span> <span style="color:#994500">data-url</span><span style="color:#a894a6">="</span><span style="color:#1a1aa6">http://ne-kurim.ru/ncounter/</span></div>
<div class="a mono" style="left:158px;top:113.8px"><span style="color:#1a1aa6">208457-20.png</span><span style="color:#a894a6">"</span> <span style="color:#994500">style</span><span style="color:#a894a6">&gt;</span> <span style="color:#888">== <i>$0</i></span></div>
<div class="a mono" style="left:158px;top:128.8px"><span style="color:#a894a6">&lt;</span><span style="color:#881280">br</span><span style="color:#a894a6">&gt;</span></div>
<div class="a mono" style="left:158px;top:143.8px"><span style="color:#a894a6">&lt;</span><span style="color:#881280">img</span> <span style="color:#994500">src</span><span style="color:#a894a6">="</span><span style="color:#1a1aa6"><u>http://ne-kurim.ru/lines/img846.jpg</u></span><span style="color:#a894a6">"</span> <span style="color:#994500">class</span><span style="color:#a894a6">="</span><span style="color:#1a1aa6">bbCodeImage</span><span style="color:#a894a6">"</span> <span style="color:#994500">alt</span><span style="color:#a894a6">="</span><span style="color:#1a1aa6">[<span style="background:#d4d4d4">&amp;#8203;</span>IMG]</span><span style="color:#a894a6">"</span> <span style="color:#994500">data-url</span><span style="color:#a894a6">="</span><span style="color:#1a1aa6">http://ne-kurim.ru/lines/</span></div>
<div class="a mono" style="left:158px;top:157.8px"><span style="color:#1a1aa6">img846.jpg</span><span style="color:#a894a6">"</span> <span style="color:#994500">style</span><span style="color:#a894a6">&gt;</span></div>
<div class="a mono" style="left:158px;top:172.8px"><span style="color:#a894a6">&lt;</span><span style="color:#881280">br</span><span style="color:#a894a6">&gt;</span></div>
<div class="a mono" style="left:158px;top:187.8px"><span style="color:#a894a6">&lt;</span><span style="color:#881280">img</span> <span style="color:#994500">src</span><span style="color:#a894a6">="</span><span style="color:#1a1aa6"><u>http://ne-kurim.ru/lines/img846.jpg</u></span><span style="color:#a894a6">"</span> <span style="color:#994500">class</span><span style="color:#a894a6">="</span><span style="color:#1a1aa6">bbCodeImage</span><span style="color:#a894a6">"</span> <span style="color:#994500">alt</span><span style="color:#a894a6">="</span><span style="color:#1a1aa6">[<span style="background:#d4d4d4">&amp;#8203;</span>IMG]</span><span style="color:#a894a6">"</span> <span style="color:#994500">data-url</span><span style="color:#a894a6">="</span><span style="color:#1a1aa6">http://ne-kurim.ru/lines/</span></div>
<div class="a mono" style="left:158px;top:201.8px"><span style="color:#1a1aa6">img846.jpg</span><span style="color:#a894a6">"</span> <span style="color:#994500">style</span><span style="color:#a894a6">&gt;</span></div>
<div class="a mono" style="left:146px;top:216.8px"><span style="color:#a894a6">&lt;/</span><span style="color:#881280">aside</span><span style="color:#a894a6">&gt;</span></div>
</div>
<div class="a" style="left:1024px;top:283px;width:17px;height:226px;background:#f1f1f1"></div>
<svg class="a" style="left:1028px;top:289px" width="9" height="6"><path d="M0.5,5 L4.5,1 L8.5,5 Z" fill="#505050"/></svg>
<div class="a" style="left:1026px;top:361px;width:13px;height:18px;background:#c1c1c1"></div>
<svg class="a" style="left:1028px;top:496px" width="9" height="6"><path d="M0.5,1 L4.5,5 L8.5,1 Z" fill="#505050"/></svg>
<div class="a" style="left:0;top:509px;width:1041px;height:1px;background:#cdcdcd"></div>
<div class="a" style="left:0;top:510px;width:1041px;height:18px;background:#fff"></div>
<div class="a ui" style="left:7px;top:512px;font-size:10.8px;color:#333;line-height:14px">#XenForo</div>
<div class="a ui" style="left:68.5px;top:512px;font-size:10.8px;color:#333;line-height:14px">body</div>
<div class="a ui" style="left:106.6px;top:512px;font-size:10.8px;color:#333;line-height:14px">#headerMover</div>
<div class="a ui" style="left:191.5px;top:512px;font-size:10.8px;color:#333;line-height:14px">#content</div>
<div class="a ui" style="left:249.7px;top:512px;font-size:10.8px;color:#333;line-height:14px">div</div>
<div class="a ui" style="left:277.9px;top:512px;font-size:10.8px;color:#333;line-height:14px">div</div>
<div class="a ui" style="left:306.4px;top:512px;font-size:10.8px;color:#333;line-height:14px">form</div>
<div class="a ui" style="left:343.7px;top:512px;font-size:10.8px;color:#333;line-height:14px">#messageList</div>
<div class="a ui" style="left:422.5px;top:512px;font-size:10.8px;color:#333;line-height:14px">#post-2270177</div>
<div class="a ui" style="left:510.8px;top:512px;font-size:10.8px;color:#333;line-height:14px">div.messageInfo.primaryContent</div>
<div class="a ui" style="left:681.6px;top:512px;font-size:10.8px;color:#333;line-height:14px">div.baseHtml.signature.messageText.ugc</div>
<div class="a ui" style="left:890.3px;top:512px;font-size:10.8px;color:#333;line-height:14px">aside</div>
<div class="a" style="left:922px;top:510px;width:104px;height:18px;background:#3879d9"></div>
<div class="a ui" style="left:930px;top:512px;font-size:10.9px;color:#fff;line-height:14px">img.bbCodeImage</div>
<div class="a" style="left:0;top:528px;width:1366px;height:1px;background:#cdcdcd"></div>
<div class="a" style="left:1041px;top:283px;width:1px;height:245px;background:#9e9e9e"></div>
<div class="a" style="left:1042px;top:283px;width:324px;height:27px;background:#f3f3f3"></div>
<div class="a" style="left:1042px;top:309px;width:324px;height:1px;background:#cdcdcd"></div>
<div class="a" style="left:1047px;top:285px;width:41px;height:25px;background:#fff;border:1px solid #cdcdcd;border-bottom:none"></div>
<div class="a ui" style="left:1052px;top:290px;color:#333;font-size:11px">Styles</div>
<div class="a ui" style="left:1093px;top:290px;color:#5a5a5a;font-size:12px">Computed</div>
<div class="a ui" style="left:1160px;top:290px;color:#5a5a5a;font-size:11.5px">Event Listeners</div>
<svg class="a" style="left:1252px;top:292px" width="10" height="9"><path d="M1,1 L4.5,4.5 L1,8 M5.5,1 L9,4.5 L5.5,8" fill="none" stroke="#444" stroke-width="1.4"/></svg>
<div class="a" style="left:1042px;top:310px;width:324px;height:26px;background:#fff"></div>
<div class="a ui" style="left:1046px;top:316px;color:#999;font-size:11.5px">Filter</div>
<div class="a mono" style="left:1241px;top:316px;color:#333;font-size:11.5px;letter-spacing:-0.5px">:hov</div>
<svg class="a" style="left:1278px;top:317px" width="16" height="13"><path d="M6,1 L11,6.5 L6,12 L1,6.5 Z" fill="#555"/><path d="M9,1 L14,6.5 L9,12" fill="none" stroke="#999" stroke-width="1.3"/></svg>
<div class="a mono" style="left:1305px;top:316px;color:#333;font-size:11.5px;letter-spacing:-0.5px">.cls</div>
<svg class="a" style="left:1344px;top:317px" width="12" height="12"><path d="M6,0.5 V11.5 M0.5,6 H11.5" stroke="#444" stroke-width="1.8"/></svg>
<svg class="a" style="left:1359px;top:329px" width="5" height="5"><path d="M5,0 L5,5 L0,5 Z" fill="#555"/></svg>
<div class="a" style="left:1042px;top:336px;width:308px;height:1px;background:#e4e4e4"></div>
<div class="a" style="left:1042px;top:337px;width:308px;height:191px;overflow:hidden;background:#fff">
<div class="a" style="left:0;top:36px;width:308px;height:1px;background:#e8e8e8"></div>
<div class="a" style="left:0;top:115px;width:308px;height:1px;background:#e8e8e8"></div>
<div class="a" style="left:0;top:166px;width:308px;height:1px;background:#e8e8e8"></div>
<div class="a mono" style="left:4px;top:3.1999999999999886px"><span style="color:#555">element.style {</span></div>
<div class="a mono" style="left:4px;top:18.69999999999999px"><span style="color:#222">}</span></div>
<div class="a mono" style="left:4px;top:39.69999999999999px"><span style="color:#222">.messageText</span></div>
<div class="a mono" style="left:4px;top:53.69999999999999px"><span style="color:#222">img</span><span style="color:#888">, .messageText iframe, .messageText</span></div>
<div class="a mono" style="left:4px;top:67.69999999999999px"><span style="color:#888">object, .messageText embed </span><span style="color:#222">{</span></div>
<div class="a mono" style="left:22px;top:83.19999999999999px"><span style="color:#c80000">max-width</span><span style="color:#222">: 100%;</span></div>
<div class="a mono" style="left:4px;top:97.69999999999999px"><span style="color:#222">}</span></div>
<div class="a mono" style="left:4px;top:118.69999999999999px"><span style="color:#222">.bbCodeImage {</span></div>
<div class="a mono" style="left:22px;top:134.7px"><span style="color:#c80000;text-decoration:line-through;text-decoration-color:#222">max-width</span><span style="color:#222;text-decoration:line-through">: 100%;</span></div>
<div class="a mono" style="left:4px;top:149.2px"><span style="color:#222">}</span></div>
<div class="a mono" style="left:4px;top:169.7px"><span style="color:#222">img {</span></div>
<div class="a mono" style="left:28px;top:183.7px"><span style="color:#8c8c8c">-ms-interpolation-mode: bicubic;</span></div>
<div class="a mono" style="right:3px;top:39.69999999999999px"><span style="color:#333;text-decoration:underline">css.php?css=xen…1468091452:795</span></div>
<div class="a mono" style="right:3px;top:118.69999999999999px"><span style="color:#333;text-decoration:underline">css.php?css=xen…1468091452:412</span></div>
<div class="a mono" style="right:3px;top:169.7px"><span style="color:#333;text-decoration:underline">css.php?css=xen…=1468091452:19</span></div>
</div>
<div class="a" style="left:1350px;top:337px;width:16px;height:191px;background:#f1f1f1"></div>
<svg class="a" style="left:1353px;top:343px" width="9" height="6"><path d="M0.5,5 L4.5,1 L8.5,5 Z" fill="#a0a0a0"/></svg>
<div class="a" style="left:1351px;top:354px;width:13px;height:18px;background:#c1c1c1"></div>
<svg class="a" style="left:1353px;top:516px" width="9" height="6"><path d="M0.5,1 L4.5,5 L8.5,1 Z" fill="#505050"/></svg>
<!-- CONSOLE DRAWER -->
<div class="a" style="left:0;top:529px;width:1366px;height:26px;background:#f3f3f3"></div>
<div class="a" style="left:0;top:555px;width:1366px;height:1px;background:#cdcdcd"></div>
<svg class="a" style="left:14px;top:536px" width="4" height="14"><circle cx="2" cy="2" r="1.4" fill="#555"/><circle cx="2" cy="7" r="1.4" fill="#555"/><circle cx="2" cy="12" r="1.4" fill="#555"/></svg>
<div class="a" style="left:31px;top:531px;width:53px;height:25px;background:#fff;border:1px solid #cdcdcd;border-bottom:none"></div>
<div class="a ui" style="left:37px;top:536px;color:#333;font-size:11.7px">Console</div>
<svg class="a" style="left:1345px;top:537px" width="10" height="10"><path d="M1,1 L9,9 M9,1 L1,9" stroke="#444" stroke-width="1.8"/></svg>
<div class="a" style="left:0;top:556px;width:1366px;height:26px;background:#fff"></div>
<div class="a" style="left:0;top:582px;width:1366px;height:1px;background:#dadada"></div>
<svg class="a" style="left:10px;top:564px" width="13" height="13"><circle cx="6.5" cy="6.5" r="5.3" fill="none" stroke="#555" stroke-width="1.8"/><path d="M2.8,2.8 L10.2,10.2" stroke="#555" stroke-width="1.8"/></svg>
<svg class="a" style="left:37px;top:564px" width="14" height="13"><path d="M1,1.2 H13 L8.3,6.5 V11.5 L5.7,12.3 V6.5 Z" fill="none" stroke="#555" stroke-width="1.6" stroke-linejoin="round"/><path d="M5.7,6.5 H8.3 V11.5 L5.7,12.3 Z" fill="#555"/></svg>
<div class="a ui" style="left:62px;top:562px;color:#555;font-size:11.7px">top</div>
<svg class="a" style="left:152px;top:566px" width="8" height="7"><path d="M0,0.5 H8 L4,6.5 Z" fill="#555"/></svg>
<div class="a" style="left:174px;top:564px;width:11px;height:11px;border:1px solid #b0b0b0;border-radius:2px;background:#f8f8f8"></div>
<div class="a ui" style="left:189px;top:562px;color:#555;font-size:11.7px">Preserve log</div>
<div class="a" style="left:0;top:583px;width:1350px;height:145px;background:#fff;overflow:hidden">
<div class="a" style="left:13px;top:4px;width:1px;height:83px;background:#b8b8b8"></div>
<div class="a" style="left:14px;top:26px;width:1336px;height:1px;background:#f0f0f0"></div>
<div class="a" style="left:14px;top:49px;width:1336px;height:1px;background:#f0f0f0"></div>
<div class="a" style="left:14px;top:68px;width:1336px;height:1px;background:#f0f0f0"></div>
<div class="a" style="left:0px;top:87px;width:1350px;height:1px;background:#f0f0f0"></div>
<div class="a" style="left:0px;top:106px;width:1350px;height:1px;background:#f0f0f0"></div>
<div class="a" style="left:0px;top:125px;width:1350px;height:1px;background:#f0f0f0"></div>
<div class="a" style="left:0;top:-1px;width:1350px;height:1px;background:#f0f0f0"></div>
<svg class="a" style="left:21px;top:10px" width="10" height="10"><circle cx="5" cy="5" r="5" fill="#2854c5"/><rect x="4.1" y="4.2" width="1.8" height="4" fill="#fff"/><circle cx="5" cy="2.5" r="1" fill="#fff"/></svg>
<div class="a mono" style="left:38px;top:7px;color:#222;">PageNav</div>
<svg class="a" style="left:91px;top:12px" width="7" height="8"><path d="M0,0 L7,4 L0,8 Z" fill="#555"/></svg>
<div class="a mono" style="left:102px;top:10.5px;color:#222;font-size:11.3px">e.fn.init[1]</div>
<svg class="a" style="left:21px;top:33px" width="10" height="10"><circle cx="5" cy="5" r="5" fill="#2854c5"/><rect x="4.1" y="4.2" width="1.8" height="4" fill="#fff"/><circle cx="5" cy="2.5" r="1" fill="#fff"/></svg>
<div class="a mono" style="left:38px;top:30px;color:#222;">PageNav</div>
<svg class="a" style="left:91px;top:35px" width="7" height="8"><path d="M0,0 L7,4 L0,8 Z" fill="#555"/></svg>
<div class="a mono" style="left:102px;top:33.5px;color:#222;font-size:11.3px">e.fn.init[1]</div>
<svg class="a" style="left:21px;top:55px" width="10" height="10"><circle cx="5" cy="5" r="5" fill="#2854c5"/><rect x="4.1" y="4.2" width="1.8" height="4" fill="#fff"/><circle cx="5" cy="2.5" r="1" fill="#fff"/></svg>
<div class="a mono" style="left:38px;top:53.5px;color:#222;">flash url: http://ne-kurim.ru/forum/js/swfupload/Flash/swfupload.swf</div>
<div class="a mono" style="left:38px;top:72.5px;color:#222;">Attachments changed, total files: 0, images: 0</div>
<svg class="a" style="left:7px;top:93px" width="10" height="10"><circle cx="5" cy="5" r="5" fill="#2854c5"/><rect x="4.1" y="4.2" width="1.8" height="4" fill="#fff"/><circle cx="5" cy="2.5" r="1" fill="#fff"/></svg>
<div class="a mono" style="left:24px;top:91.5px;color:#222;">XenForo.init() 536ms. jQuery 1.11.0/1.2.8-dev</div>
<div class="a mono" style="left:24px;top:110.5px;color:#222;">BBCodeImage: this.actualWidth = 55, currentWidth = 55</div>
<svg class="a" style="left:10px;top:131px" width="6" height="9"><path d="M1,1 L5,4.5 L1,8" fill="none" stroke="#367cf1" stroke-width="1.6"/></svg>
<div class="a mono" style="right:23px;top:7.5px;color:#333;text-decoration:underline">xenforo.js?_v=5a97b56d:271</div>
<div class="a mono" style="right:23px;top:30.5px;color:#333;text-decoration:underline">xenforo.js?_v=5a97b56d:271</div>
<div class="a mono" style="right:23px;top:53.5px;color:#333;text-decoration:underline">attachment_editor.js?_v=5a97b56d:6</div>
<div class="a mono" style="right:23px;top:72.5px;color:#333;text-decoration:underline">attachment_editor.js?_v=5a97b56d:13</div>
<div class="a mono" style="right:23px;top:91.5px;color:#333;text-decoration:underline">xenforo.js?_v=5a97b56d:209</div>
<div class="a mono" style="right:23px;top:110.5px;color:#333;text-decoration:underline">xenforo.js?_v=5a97b56d:311</div>
</div>
<div class="a" style="left:1350px;top:583px;width:16px;height:145px;background:#f1f1f1"></div>
<svg class="a" style="left:1353px;top:589px" width="9" height="6"><path d="M0.5,5 L4.5,1 L8.5,5 Z" fill="#505050"/></svg>
<div class="a" style="left:1351px;top:612px;width:13px;height:98px;background:#c1c1c1"></div>
<svg class="a" style="left:1353px;top:715px" width="9" height="6"><path d="M0.5,1 L4.5,5 L8.5,1 Z" fill="#505050"/></svg>
<!-- TASKBAR -->
<div class="a" style="left:0;top:728px;width:1366px;height:40px;background:linear-gradient(90deg,#3b4533 0px,#33402f 12px,#2c3630 30px,#29332f 90px,#273130 200px,#2a3232 300px,#292f32 450px,#2b3033 600px,#2a2f33 730px,#262e36 880px,#293138 950px,#2d3836 990px,#35453a 1030px,#394935 1080px,#33423a 1140px,#2d3a35 1200px,#232b2f 1250px,#1f262c 1366px)"></div>
<div class="a" style="left:0;top:728px;width:1366px;height:1px;background:#2c3336"></div>
<div class="a" style="left:440px;top:728px;width:48px;height:40px;background:rgba(190,210,235,0.2)"></div>
<svg class="a" style="left:16px;top:740px" width="17" height="16" viewBox="0 0 17 16"><path d="M0,2.4 L7.1,1.5 V7.6 H0 Z M7.9,1.3 L17,0 V7.6 H7.9 Z M0,8.4 H7.1 V14.5 L0,13.6 Z M7.9,8.4 H17 V16 L7.9,14.7 Z" fill="#fff"/></svg>
<svg class="a" style="left:63px;top:739px" width="18" height="18" viewBox="0 0 18 18"><circle cx="10.8" cy="7.2" r="5.6" fill="none" stroke="#fff" stroke-width="1.4"/><path d="M6.8,11.2 L1,17" stroke="#fff" stroke-width="1.6"/></svg>
<svg class="a" style="left:109px;top:740px" width="22" height="16" viewBox="0 0 22 16"><rect x="4.5" y="1" width="13" height="14" fill="none" stroke="#fff" stroke-width="1.3"/><path d="M2.5,3.5 H0.8 V12.5 H2.5 M19.5,3.5 H21.2 V12.5 H19.5" fill="none" stroke="#fff" stroke-width="1.2"/></svg>
<svg class="a" style="left:158px;top:738px" width="24" height="20" viewBox="0 0 24 20"><path d="M1,1 H8 L10,3 H22 V18 H1 Z" fill="#f2c75a"/><path d="M1,4 H22 V18 H1 Z" fill="#fbe08a"/><path d="M5,18 V10 H18 V18 H14 V13 H9 V18 Z" fill="#2fb0e8"/><path d="M9,13 H14 V18 H9 Z" fill="#fbe08a"/></svg>
<div class="a" style="left:208px;top:738px;width:21px;height:20px;background:linear-gradient(#0c5fb0,#05386e);border:1px solid #2b7fd0;color:#9fd4ff;font-weight:bold;font-size:12px;line-height:18px;text-align:center">Ps</div>
<svg class="a" style="left:257px;top:737px" width="21" height="21" viewBox="0 0 21 21"><path d="M20.5,12.5 H6.5 Q7,17 12,17 Q16,17 19,15 V19.5 Q15.5,21 11.5,21 Q3,21 3,12.5 Q3,6 8.5,4.5 Q6,7 6.3,9.5 H15.5 Q15,6 11.5,5.5 Q8,5.5 4.5,8 Q2,9.5 0.5,12 Q1,1 11,1 Q20.5,1 20.5,10.5 Z" fill="#1e88dc"/></svg>
<svg class="a" style="left:305px;top:736px" width="24" height="24" viewBox="0 0 24 24"><defs><linearGradient id="ffg" x1="0" y1="0" x2="1" y2="1"><stop offset="0" stop-color="#ff9a1f"/><stop offset="0.6" stop-color="#e8611c"/><stop offset="1" stop-color="#d8501a"/></linearGradient><radialGradient id="ffb" cx="0.4" cy="0.3" r="0.7"><stop offset="0" stop-color="#4fc3f0"/><stop offset="0.7" stop-color="#1b74c6"/><stop offset="1" stop-color="#153f8f"/></radialGradient></defs><circle cx="12" cy="12" r="11" fill="url(#ffg)"/><path d="M23,12 A11,11 0 0 1 17,21.8 Q21,17 20,11 Z" fill="#ffd23a"/><ellipse cx="13.5" cy="9.5" rx="7.5" ry="7.5" fill="url(#ffb)"/><path d="M1.5,9 Q2.5,3 7,2.5 Q6,5 8.5,7 Q11,9.5 9,12 Q10.5,15.5 15,14.5 Q18,14 20,11 Q19.5,18 12.5,19 Q6,19.5 3,15 Q1,12 1.5,9 Z" fill="url(#ffg)"/><path d="M3,3.5 Q5,2.5 7,2.5 L5.5,5 Z" fill="#f0a040"/></svg>
<svg class="a" style="left:354px;top:737px" width="24" height="22" viewBox="0 0 24 22"><ellipse cx="12" cy="11" rx="11.5" ry="11" fill="#e11d2b"/><ellipse cx="12" cy="11" rx="4.5" ry="7.5" fill="#1f292d"/></svg>
<svg class="a" style="left:405px;top:736px" width="20" height="23" viewBox="0 0 20 23"><rect x="0" y="0" width="20" height="23" fill="#fff"/><rect x="2" y="2" width="16" height="5" fill="#1f292d"/><g fill="#1f292d"><rect x="3" y="9" width="3" height="2.5"/><rect x="8.5" y="9" width="3" height="2.5"/><rect x="14" y="9" width="3" height="2.5"/><rect x="3" y="13.5" width="3" height="2.5"/><rect x="8.5" y="13.5" width="3" height="2.5"/><rect x="14" y="13.5" width="3" height="2.5"/><rect x="3" y="18" width="3" height="2.5"/><rect x="8.5" y="18" width="3" height="2.5"/><rect x="14" y="18" width="3" height="2.5"/></g></svg>
<svg class="a" style="left:452px;top:736px" width="26" height="26" viewBox="0 0 26 26"><path d="M11.5,11.5 L1.63,7.91 A10.5,10.5 0 0 1 19.54,4.75 Z" fill="#db4437"/><path d="M11.5,11.5 L19.54,4.75 A10.5,10.5 0 0 1 13.32,21.84 Z" fill="#f4c20d"/><path d="M11.5,11.5 L13.32,21.84 A10.5,10.5 0 0 1 1.63,7.91 Z" fill="#0f9d58"/><circle cx="11.5" cy="11.5" r="5" fill="#fff"/><circle cx="11.5" cy="11.5" r="3.9" fill="#4285f4"/><ellipse cx="19" cy="23.5" rx="5.5" ry="3" fill="#e8b830"/><rect x="17.5" y="21" width="3" height="3" fill="#f0c8a0"/><circle cx="19" cy="17.5" r="4" fill="#f0c090"/><path d="M14.8,17 Q15,12.5 19,12.5 Q23,12.5 23.2,17 L22,15.5 Q19,14 16,15.5 Z" fill="#1a1a1a"/><rect x="15.5" y="16.5" width="7" height="2.2" rx="1" fill="#4a78c8"/></svg>
<svg class="a" style="left:501px;top:736px" width="24" height="25" viewBox="0 0 24 25"><path d="M12,1 Q23,1 23,11 Q23,20 13,20.5 L8,24 V20 Q1,18 1,11 Q1,1 12,1 Z" fill="#7b529e" stroke="#fff" stroke-width="1.6"/><path d="M7,6 Q8,5 9,6 L10,8 Q10,9 9,9.5 Q10,12 12.5,13.5 Q13,12.5 14,12.5 L16,13.5 Q17,14.5 16,15.5 Q14,17 10,14 Q6,10.5 7,6Z" fill="#fff"/></svg>
<svg class="a" style="left:550px;top:736px" width="24" height="24" viewBox="0 0 24 24"><circle cx="7" cy="7" r="6.5" fill="#1daae6"/><circle cx="17" cy="17" r="6.5" fill="#1daae6"/><circle cx="12" cy="12" r="10" fill="#1daae6"/><text x="12" y="17" text-anchor="middle" font-family="Liberation Sans" font-weight="bold" font-size="15" fill="#fff">S</text></svg>
<svg class="a" style="left:599px;top:736px" width="24" height="24" viewBox="0 0 24 24"><circle cx="7" cy="7" r="6.5" fill="#1daae6"/><circle cx="17" cy="17" r="6.5" fill="#1daae6"/><circle cx="12" cy="12" r="10" fill="#1daae6"/><text x="12" y="17" text-anchor="middle" font-family="Liberation Sans" font-weight="bold" font-size="15" fill="#fff">S</text></svg>
<svg class="a" style="left:647px;top:737px" width="24" height="21" viewBox="0 0 24 21"><rect x="1" y="1" width="22" height="19" fill="#cfe3f2" stroke="#4f8cc8" stroke-width="1.5"/><rect x="3" y="3" width="18" height="15" fill="#77b4d8"/><path d="M3,12 Q9,8 14,11 Q18,13 21,11 V18 H3 Z" fill="#4f8a5a"/></svg>
<svg class="a" style="left:696px;top:737px" width="25" height="21" viewBox="0 0 25 21"><path d="M5,3 H24 L20,19 H1 Z" fill="#3c8ad6"/><path d="M7,5 H21.5 L18.5,17 H4 Z" fill="#a7d3f5"/><rect x="9" y="9" width="8" height="3" fill="#2a6fb5"/></svg>
<div class="a" style="left:395px;top:766px;width:40px;height:2px;background:#8d9dba"></div>
<div class="a" style="left:440px;top:766px;width:48px;height:2px;background:#a6b8d2"></div>
<div class="a" style="left:542px;top:766px;width:39px;height:2px;background:#8d9dba"></div>
<div class="a" style="left:591px;top:766px;width:40px;height:2px;background:#8d9dba"></div>
<div class="a" style="left:640px;top:766px;width:40px;height:2px;background:#8d9dba"></div>
<div class="a" style="left:690px;top:766px;width:39px;height:2px;background:#8d9dba"></div>
<!-- tray -->
<svg class="a" style="left:1159px;top:743px" width="14" height="9"><path d="M1,8 L7,2 L13,8" fill="none" stroke="#fff" stroke-width="1.3"/></svg>
<svg class="a" style="left:1182px;top:739px" width="17" height="16" viewBox="0 0 17 16"><path d="M1,5.5 H4 L8,2 V14 L4,10.5 H1 Z" fill="none" stroke="#fff" stroke-width="1.1"/><path d="M10.5,5.5 Q12,8 10.5,10.5 M12.5,3.5 Q15,8 12.5,12.5" fill="none" stroke="#fff" stroke-width="1"/><path d="M14.5,1.5 Q18,8 14.5,14.5" fill="none" stroke="#888" stroke-width="1"/></svg>
<svg class="a" style="left:1208px;top:741px" width="14" height="13" viewBox="0 0 14 13"><path d="M1,12 Q1,1 13,1 M4,12 Q4,4 13,4 M7,12 Q7,7 13,7 M10,12 Q10,10 13,10" fill="none" stroke="#fff" stroke-width="1.2"/></svg>
<svg class="a" style="left:1230px;top:739px" width="17" height="17" viewBox="0 0 17 17"><path d="M0.8,0.8 H16.2 V12.2 H9 L6,15.5 V12.2 H0.8 Z" fill="none" stroke="#fff" stroke-width="1.2"/><path d="M3.5,4 H13.5 M3.5,6.5 H13.5 M3.5,9 H13.5" stroke="#fff" stroke-width="1"/></svg>
<div class="a" style="left:1257px;top:741px;color:#fff;font-size:11.5px;line-height:14px">РУС</div>
<div class="a" style="left:1296px;top:731px;width:56px;color:#fff;font-size:11.5px;line-height:16px;text-align:center">1:12<br>10.07.2016</div>
<div class="a" style="left:1362px;top:728px;width:1px;height:40px;background:#6a7070"></div>
</body></html>
